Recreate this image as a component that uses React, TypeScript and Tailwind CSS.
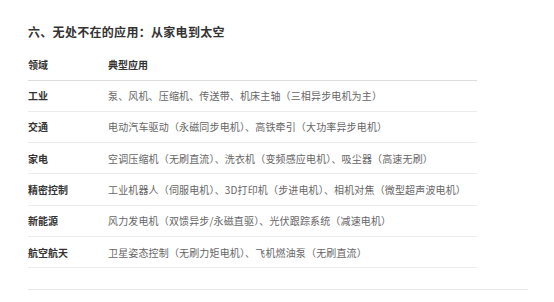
import React from "react";

const rows = [
  { field: "工业", usage: "泵、风机、压缩机、传送带、机床主轴（三相异步电机为主）" },
  { field: "交通", usage: "电动汽车驱动（永磁同步电机）、高铁牵引（大功率异步电机）" },
  { field: "家电", usage: "空调压缩机（无刷直流）、洗衣机（变频感应电机）、吸尘器（高速无刷）" },
  { field: "精密控制", usage: "工业机器人（伺服电机）、3D打印机（步进电机）、相机对焦（微型超声波电机）" },
  { field: "新能源", usage: "风力发电机（双馈异步/永磁直驱）、光伏跟踪系统（减速电机）" },
  { field: "航空航天", usage: "卫星姿态控制（无刷力矩电机）、飞机燃油泵（无刷直流）" },
];

const App = () => {
  return (
    <div
      className="w-[554px] h-[302px] bg-white pl-[28px] pt-[24px]"
      style={{ fontFamily: '"Noto Sans CJK SC", "Noto Sans", sans-serif' }}
    >
      <h2 className="text-[12px] leading-[16px] font-bold tracking-[0.3px] text-[#333]">
        六、无处不在的应用：从家电到太空
      </h2>
      <table className="w-[449px] mt-[10px] border-collapse text-[10px]">
        <thead>
          <tr className="h-[30px] border-b border-[#dcdcdc] text-left">
            <th className="w-[80px] font-semibold text-[#333]">领域</th>
            <th className="font-semibold text-[#333]">典型应用</th>
          </tr>
        </thead>
        <tbody>
          {rows.map((row) => (
            <tr key={row.field} className="h-[31.33px] border-b border-[#ececec]">
              <td className="font-semibold text-[#333]">{row.field}</td>
              <td className="text-[#666] tracking-[0.15px]">{row.usage}</td>
            </tr>
          ))}
        </tbody>
      </table>
      <div className="w-[500px] mt-[21px] border-t border-[#e6e6e6]" />
    </div>
  );
};

export default App;
